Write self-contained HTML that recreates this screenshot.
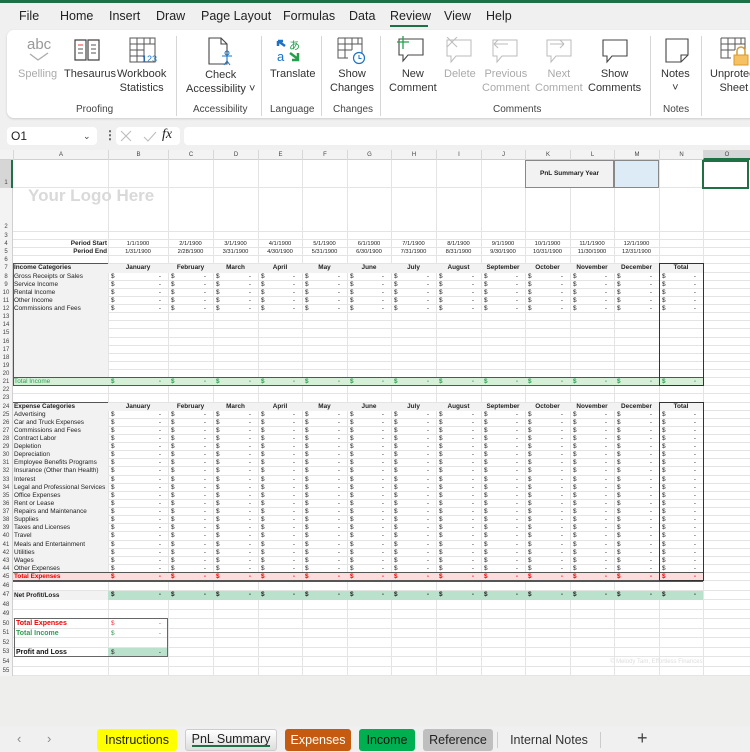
<!DOCTYPE html>
<html><head><meta charset="utf-8"><style>
*{box-sizing:border-box;margin:0;padding:0}
body{width:750px;height:752px;overflow:hidden;background:#f0f0f0;font-family:"Liberation Sans",sans-serif;position:relative;color:#222}
.a{position:absolute;white-space:nowrap}
.menu{font-size:12.5px;top:9px;color:#222}
.rl{font-size:11px;text-align:center;line-height:14px;color:#333}
.dis{color:#aaa}
.gl{font-size:10px;top:104px;color:#444}
.sep{position:absolute;top:36px;width:1px;height:80px;background:#d6d6d6}
#grid{position:absolute;left:0;top:150px;width:750px;height:526px;background:#fff;overflow:hidden}
.c{position:absolute;font-size:6.4px;line-height:8px;white-space:nowrap;overflow:visible}
.tab{position:absolute;top:729px;height:22px;font-size:12.5px;line-height:22px;text-align:center;border-radius:3px}
</style></head><body>
<div class="a" style="left:0;top:0;width:750px;height:3px;background:#1e7145"></div>
<div class="a menu" style="left:19px">File</div>
<div class="a menu" style="left:60px">Home</div>
<div class="a menu" style="left:109px">Insert</div>
<div class="a menu" style="left:156px">Draw</div>
<div class="a menu" style="left:201px">Page Layout</div>
<div class="a menu" style="left:283px">Formulas</div>
<div class="a menu" style="left:349px">Data</div>
<div class="a menu" style="left:390px">Review</div>
<div class="a" style="left:390px;top:25px;width:38px;height:2px;background:#1e7145"></div>
<div class="a menu" style="left:444px">View</div>
<div class="a menu" style="left:486px">Help</div>

<div class="a" style="left:7px;top:30px;width:760px;height:88px;background:#fff;border-radius:7px;box-shadow:0 1px 2px #ccc"></div>
<div class="a" style="left:27px;top:36px;font-size:15px;color:#999">abc</div>
<svg class="a" style="left:28px;top:52px" width="22" height="10"><path d="M2 2 L10 8 L20 1" stroke="#aaa" fill="none" stroke-width="1.3"/></svg>
<svg class="a" style="left:73px;top:37px" width="30" height="26"><path d="M2 3h11v20H2z M15 3h11v20H15z" fill="none" stroke="#444" stroke-width="1.2"/><path d="M5 8h5M5 12h5M5 16h5M18 8h5M18 12h5M18 16h5" stroke="#555"/><path d="M5 8h5" stroke="#e33"/></svg>
<svg class="a" style="left:129px;top:37px" width="28" height="26"><path d="M1 1h25v24H1z M1 7h25 M1 13h14 M1 19h14 M8 1v24 M15 1v24 M21 1v6" fill="none" stroke="#555" stroke-width="1"/><text x="13" y="25" font-size="9" fill="#1a73c8" font-family="Liberation Sans">123</text></svg>
<svg class="a" style="left:206px;top:37px" width="28" height="30"><path d="M3 1h12l6 6v20H3z M15 1v6h6" fill="none" stroke="#444" stroke-width="1.1"/><circle cx="21" cy="16" r="2" fill="none" stroke="#1a73c8"/><path d="M16 19h10M21 19v5l-3 4M21 24l3 4" stroke="#1a73c8" fill="none"/></svg>
<svg class="a" style="left:276px;top:37px" width="28" height="26"><path d="M2 4l7 5M2 4h5M2 4v5" stroke="#1a73c8" stroke-width="2.5" fill="none"/><text x="1" y="24" font-size="13" fill="#1a73c8" font-family="Liberation Sans">a</text><text x="13" y="12" font-size="11" fill="#22a04a" font-family="Noto Sans CJK JP">あ</text><path d="M14 16l8 6M22 16v7h-6" stroke="#22a04a" stroke-width="2.5" fill="none"/></svg>
<svg class="a" style="left:337px;top:37px" width="30" height="28"><path d="M1 1h24v16 M1 1v20h10 M1 7h24 M1 13h14 M8 1v20 M15 1v12 M21 1v6" fill="none" stroke="#555"/><circle cx="22" cy="21" r="5.5" fill="#fff" stroke="#1a73c8" stroke-width="1.2"/><path d="M22 18v3.5h2.5" stroke="#1a73c8" fill="none"/></svg>
<svg class="a" style="left:396px;top:36px" width="30" height="28"><path d="M7 3h20v16H12l-5 6v-6H3V3h4" fill="none" stroke="#444" stroke-width="1.1"/><path d="M7 0v13M1 6h12" stroke="#22a04a" stroke-width="1.3"/></svg>
<svg class="a" style="left:444px;top:37px" width="30" height="28"><path d="M3 3h24v16H12l-5 6v-6H3z" fill="none" stroke="#bbb"/><path d="M3 0l10 10M13 0L3 10" stroke="#bbb"/></svg>
<svg class="a" style="left:490px;top:37px" width="30" height="28"><path d="M3 3h24v16H12l-5 6v-6H3z" fill="none" stroke="#bbb"/><path d="M4 7h14M4 7l4-4M4 7l4 4" stroke="#bbb" fill="none"/></svg>
<svg class="a" style="left:544px;top:37px" width="30" height="28"><path d="M3 3h24v16H12l-5 6v-6H3z" fill="none" stroke="#bbb"/><path d="M6 7h14M20 7l-4-4M20 7l-4 4" stroke="#bbb" fill="none"/></svg>
<svg class="a" style="left:600px;top:37px" width="30" height="28"><path d="M3 3h24v16H12l-5 6v-6H3z" fill="none" stroke="#444" stroke-width="1.1"/></svg>
<svg class="a" style="left:664px;top:37px" width="26" height="28"><path d="M2 2h22v16l-7 7H2z M24 18h-7v7" fill="none" stroke="#444" stroke-width="1.1"/></svg>
<svg class="a" style="left:720px;top:37px" width="30" height="30"><path d="M1 1h24v14 M1 1v20h10 M1 7h24 M1 13h14 M8 1v20 M15 1v12 M21 1v6" fill="none" stroke="#555"/><rect x="14" y="18" width="14" height="10" fill="#f5c163" stroke="#d99a2b"/><path d="M17 18v-4a4 4 0 0 1 8 0v4" fill="none" stroke="#d99a2b" stroke-width="1.5"/></svg>

<div class="a rl dis" style="left:18px;top:67px">Spelling</div>
<div class="a rl" style="left:64px;top:67px">Thesaurus</div>
<div class="a rl" style="left:117px;top:67px">Workbook<br>Statistics</div>
<div class="a rl" style="left:186px;top:68px">Check<br>Accessibility ˅</div>
<div class="a rl" style="left:270px;top:67px">Translate</div>
<div class="a rl" style="left:330px;top:67px">Show<br>Changes</div>
<div class="a rl" style="left:389px;top:67px">New<br>Comment</div>
<div class="a rl dis" style="left:444px;top:67px">Delete</div>
<div class="a rl dis" style="left:482px;top:67px">Previous<br>Comment</div>
<div class="a rl dis" style="left:535px;top:67px">Next<br>Comment</div>
<div class="a rl" style="left:588px;top:67px">Show<br>Comments</div>
<div class="a rl" style="left:661px;top:67px">Notes<br>˅</div>
<div class="a rl" style="left:710px;top:67px">Unprotect<br>Sheet</div>
<div class="a gl" style="left:76px">Proofing</div>
<div class="a gl" style="left:193px">Accessibility</div>
<div class="a gl" style="left:270px">Language</div>
<div class="a gl" style="left:333px">Changes</div>
<div class="a gl" style="left:493px">Comments</div>
<div class="a gl" style="left:663px">Notes</div>
<div class="sep" style="left:176px"></div><div class="sep" style="left:261px"></div><div class="sep" style="left:321px"></div><div class="sep" style="left:380px"></div><div class="sep" style="left:650px"></div><div class="sep" style="left:701px"></div>

<div class="a" style="left:7px;top:127px;width:90px;height:18px;background:#fff;border-radius:4px;font-size:12px;line-height:18px;padding-left:4px">O1<span style="position:absolute;left:76px;font-size:9px;color:#444">&#8964;</span></div>
<div class="a" style="left:104px;top:128px;font-size:12px;font-weight:bold;color:#555">⋮</div>
<div class="a" style="left:116px;top:127px;width:64px;height:18px;background:#fff;border-radius:4px"></div>
<svg class="a" style="left:118px;top:129px" width="40" height="14"><path d="M3 2l10 10M13 2L3 12M26 8l4 4l8-9" stroke="#bbb" fill="none"/></svg>
<div class="a" style="left:162px;top:127px;font-family:'Liberation Serif',serif;font-style:italic;font-size:14px">fx</div>
<div class="a" style="left:184px;top:127px;width:570px;height:18px;background:#fff;border-radius:4px"></div>

<div id="grid"></div>
<div class="a" style="left:0;top:676px;width:750px;height:50px;background:#eeeeed"></div>

<div class="a" style="left:17px;top:731px;font-size:13px;color:#888">‹</div>
<div class="a" style="left:47px;top:731px;font-size:13px;color:#888">›</div>
<div class="tab" style="left:97px;width:80px;background:#ffff00;color:#222">Instructions</div>
<div class="tab" style="left:185px;width:92px;background:linear-gradient(#fff,#ddd);border:1px solid #ccc;color:#222;line-height:18px">PnL Summary<div style="position:absolute;left:6px;right:6px;bottom:3px;height:2px;background:#1e7145"></div></div>
<div class="tab" style="left:285px;width:66px;background:#c55a11;color:#fff">Expenses</div>
<div class="tab" style="left:359px;width:56px;background:#00b050;color:#111">Income</div>
<div class="tab" style="left:423px;width:70px;background:#bfbfbf;color:#222">Reference</div>
<div class="tab" style="left:500px;width:98px;color:#333">Internal Notes</div>
<div class="a" style="left:497px;top:732px;width:1px;height:16px;background:#ccc"></div>
<div class="a" style="left:600px;top:732px;width:1px;height:16px;background:#ccc"></div>
<div class="a" style="left:637px;top:728px;font-size:18px;color:#444">+</div>

<script>
var g=document.getElementById('grid');
var X=[0,13,108,168,213,258,302,347,391,436,481,525,570,614,659,703,750];
var L=['A','B','C','D','E','F','G','H','I','J','K','L','M','N','O'];
var T=[],H=[];
T[1]=10;H[1]=28;T[2]=38;H[2]=44;
for(var r=3;r<=45;r++){T[r]=82+(r-3)*8.12;H[r]=8.12;}
for(var r=46;r<=56;r++){T[r]=T[45]+8.12+(r-46)*9.5;H[r]=9.5;}
var h='';
function box(x,y,w,ht,st,txt){h+='<div class="c" style="left:'+x+'px;top:'+y+'px;width:'+w+'px;height:'+ht+'px;'+(st||'')+'">'+(txt||'')+'</div>';}
box(0,0,750,10,'background:#f3f3f3;border-bottom:1px solid #d0d0d0');
for(var i=0;i<15;i++){box(X[i+1],0,X[i+2]-X[i+1],10,'border-left:1px solid #d8d8d8;text-align:center;font-size:6px;line-height:10px;color:#444;'+(i==14?'background:#d6d6d6;border-bottom:2px solid #1e7145;':''),L[i]);}
box(0,10,13,516,'background:#f3f3f3;border-right:1px solid #d0d0d0');
box(0,T[1],13,H[1],'background:#d6d6d6;border-right:2px solid #1e7145');
for(var r=1;r<=55;r++){box(13,T[r]+H[r]-1,737,1,'background:#e4e4e4');
 var lh=Math.min(H[r],9);
 box(0,T[r]+H[r]-lh,12,lh,'text-align:center;font-size:6px;line-height:'+lh+'px;color:#444',''+r);}
for(var i=2;i<16;i++){box(X[i],10,1,516,'background:#e4e4e4');}
function bg(r1,r2,c1,c2,col){box(X[c1],T[r1],X[c2+1]-X[c1],T[r2]+H[r2]-T[r1],'background:'+col);}
bg(7,20,1,1,'#f2f2f2');bg(7,7,2,14,'#f2f2f2');
bg(24,44,1,1,'#f2f2f2');bg(24,24,2,14,'#f2f2f2');
bg(21,21,1,14,'#d6f0d8');bg(45,45,1,14,'#fcdcdc');bg(47,47,2,14,'#b9e1cb');bg(47,47,1,1,'#f2f2f2');bg(53,53,2,2,'#b9e1cb');
box(X[11],T[1],X[13]-X[11],H[1],'background:#f2f2f2;border:1px solid #888;text-align:center;line-height:26px;font-weight:bold;font-size:6.5px','PnL Summary Year');
box(X[13],T[1],X[14]-X[13],H[1],'background:#ddebf7;border:1px solid #888');
box(X[15]-1,T[1],X[16]-X[15],H[1]+1,'border:2px solid #1e7145');
box(X[1]+15,36,200,20,'font-size:17px;line-height:20px;font-weight:bold;color:#d9d9d9','Your Logo Here');
var ends=['1/31/1900','2/28/1900','3/31/1900','4/30/1900','5/31/1900','6/30/1900','7/31/1900','8/31/1900','9/30/1900','10/31/1900','11/30/1900','12/31/1900'];
var mon=['January','February','March','April','May','June','July','August','September','October','November','December'];
box(X[1],T[4],X[2]-X[1]-1,8,'text-align:right;font-weight:bold','Period Start');
box(X[1],T[5],X[2]-X[1]-1,8,'text-align:right;font-weight:bold','Period End');
for(var m=0;m<12;m++){var x=X[m+2],w=X[m+3]-X[m+2];
 box(x,T[4],w,8,'text-align:center;font-size:5.8px',(m+1)+'/1/1900');
 box(x,T[5],w,8,'text-align:center;font-size:5.8px',ends[m]);
 box(x,T[7],w,8,'text-align:center;font-weight:bold',mon[m]);
 box(x,T[24],w,8,'text-align:center;font-weight:bold',mon[m]);}
box(X[14],T[7],X[15]-X[14],8,'text-align:center;font-weight:bold','Total');
box(X[14],T[24],X[15]-X[14],8,'text-align:center;font-weight:bold','Total');
function dl(r,c,col,b){box(X[c]+3,T[r],X[c+1]-X[c]-10,8,'color:'+col+';'+(b?'font-weight:bold;':''),'$<span style="position:absolute;right:0">-</span>');}
function rowA(r,t,st){box(X[1]+1,T[r],95,8,st||'',t);}
rowA(7,'Income Categories','font-weight:bold');
var inc=['Gross Receipts or Sales','Service Income','Rental Income','Other Income','Commissions and Fees'];
for(var i=0;i<5;i++){rowA(8+i,inc[i]);for(var c=2;c<=14;c++)dl(8+i,c,'#222');}
rowA(21,'Total Income','color:#2e9e4f');for(var c=2;c<=14;c++)dl(21,c,'#2e9e4f',1);
rowA(24,'Expense Categories','font-weight:bold');
var ex=['Advertising','Car and Truck Expenses','Commissions and Fees','Contract Labor','Depletion','Depreciation','Employee Benefits Programs','Insurance (Other than Health)','Interest','Legal and Professional Services','Office Expenses','Rent or Lease','Repairs and Maintenance','Supplies','Taxes and Licenses','Travel','Meals and Entertainment','Utilities','Wages','Other Expenses'];
for(var i=0;i<20;i++){rowA(25+i,ex[i]);for(var c=2;c<=14;c++)dl(25+i,c,'#222');}
rowA(45,'Total Expenses','color:#e00;font-weight:bold');for(var c=2;c<=14;c++)dl(45,c,'#e00',1);
rowA(47,'Net Profit/Loss','font-weight:bold;line-height:9px');for(var c=2;c<=14;c++)dl(47,c,'#222',1);
box(X[1],T[7]-1,1,T[21]+H[21]-T[7]+1,'background:#555');
box(X[1],T[21]-1,X[15]-X[1],1,'background:#555');box(X[1],T[21]+H[21]-1,X[15]-X[1],1,'background:#555');
box(X[1],T[24]-1,X[2]-X[1],1,'background:#555');box(X[1],T[7]-1,X[2]-X[1],1,'background:#555');
box(X[1],T[45]-1,X[15]-X[1],1,'background:#555');box(X[1],T[45]+H[45]-1,X[15]-X[1],1.5,'background:#555');
box(X[14],T[7]-1,X[15]-X[14]+1,T[21]+H[21]-T[7]+1,'border:1.5px solid #333');
box(X[14],T[24]-1,X[15]-X[14]+1,T[45]+H[45]-T[24]+1,'border:1.5px solid #333');
box(X[1]+1,T[50]-1,X[3]-X[1]-1,T[53]+H[53]-T[50]+1,'border:1px solid #666');
box(X[1]+3,T[50]+1,90,8,'color:#e00;font-weight:bold;font-size:7px','Total Expenses');
box(X[1]+3,T[51]+1,90,8,'color:#2e9e4f;font-weight:bold;font-size:7px','Total Income');
box(X[1]+3,T[53]+1,90,8,'color:#111;font-weight:bold;font-size:7px','Profit and Loss');
box(X[2]+3,T[50]+1,50,8,'color:#e33','$<span style="position:absolute;right:0">-</span>');
box(X[2]+3,T[51]+1,50,8,'color:#2e9e4f','$<span style="position:absolute;right:0">-</span>');
box(X[2]+3,T[53]+1,50,8,'color:#222','$<span style="position:absolute;right:0">-</span>');
box(X[12]+40,T[54]+1,160,8,'color:#ddd;font-size:6px','© Melody Tam, Effortless Finances');
g.innerHTML=h;
</script>
</body></html>
